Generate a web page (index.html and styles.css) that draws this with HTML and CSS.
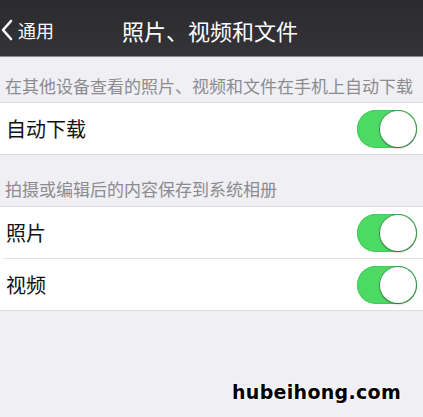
FILE: index.html
```html
<!DOCTYPE html>
<html lang="zh">
<head>
<meta charset="utf-8">
<link rel="stylesheet" href="styles.css">
</head>
<body>
<div class="page">
  <header class="nav">
    <div class="back">
      <svg class="chev" width="12" height="22" viewBox="0 0 12 22"><path d="M10 2 L2 11 L10 20" fill="none" stroke="#fff" stroke-width="2.6" stroke-linecap="round" stroke-linejoin="round"/></svg>
      <span>通用</span>
    </div>
    <div class="title">照片、视频和文件</div>
  </header>
  <div class="sec-head first">在其他设备查看的照片、视频和文件在手机上自动下载</div>
  <div class="group">
    <div class="row"><span class="label">自动下载</span><span class="switch"><span class="knob"></span></span></div>
  </div>
  <div class="sec-head">拍摄或编辑后的内容保存到系统相册</div>
  <div class="group">
    <div class="row"><span class="label">照片</span><span class="switch"><span class="knob"></span></span></div>
    <div class="sep"></div>
    <div class="row"><span class="label">视频</span><span class="switch"><span class="knob"></span></span></div>
  </div>
  <div class="footer"><span class="mark">hubeihong.com</span></div>
</div>
</body>
</html>
```

FILE: styles.css
```css
html, body { margin: 0; padding: 0; }
body {
  background: #efeff4;
  font-family: "Noto Sans CJK SC", "Noto Sans", sans-serif;
  width: 423px;
  height: 417px;
  overflow: hidden;
}
.page { display: flex; flex-direction: column; height: 417px; }
.nav {
  height: 57px;
  background: linear-gradient(#2b2b2f, #333338);
  display: flex;
  align-items: center;
  position: relative;
  border-bottom: 1px solid #8a8a8e;
  box-sizing: border-box;
}
.back {
  display: flex;
  align-items: center;
  color: #fff;
  font-size: 18px;
  gap: 5px;
  padding-left: 1px;
  margin-top: 3px;
}
.chev { display: block; }
.title {
  position: absolute;
  left: 0; right: 0;
  top: 0; bottom: 0;
  display: flex;
  align-items: center;
  justify-content: center;
  color: #fff;
  font-size: 22px;
  padding-right: 3px;
  margin-top: 3px;
  pointer-events: none;
}
.sec-head {
  color: #8b8b90;
  font-size: 17px;
  padding: 0 0 0 5px;
  height: 52px;
  box-sizing: border-box;
  display: flex;
  align-items: flex-end;
  padding-bottom: 5px;
  border-bottom: 1px solid #dcdce0;
  white-space: nowrap;
}
.sec-head.first { height: 46px; padding-bottom: 4px; }
.group {
  background: #fff;
  border-bottom: 1px solid #dcdce0;
}
.row {
  height: 51px;
  display: flex;
  align-items: center;
  justify-content: space-between;
  padding: 0 6px 0 6px;
}
.label { font-size: 20px; color: #111; }
.sep { height: 1px; background: #e2e2e6; margin-left: 4px; }
.switch {
  width: 60px;
  height: 38px;
  border-radius: 19px;
  background: #4cd964;
  position: relative;
  box-shadow: 0 0 0 1px #45c95c inset;
}
.knob {
  position: absolute;
  right: 1px;
  top: 1px;
  width: 36px;
  height: 36px;
  border-radius: 50%;
  background: #fff;
  box-shadow: 0 1px 2px rgba(0,0,0,0.35), 0 0 0 1px rgba(60,110,70,0.45);
}
.footer {
  flex: 1;
  display: flex;
  align-items: flex-end;
  justify-content: flex-end;
  padding: 0 22px 14px 0;
}
.mark {
  font-family: "DejaVu Sans", sans-serif;
  font-weight: bold;
  font-size: 19px;
  color: #000;
  text-shadow: 0 0 2px #fff, 0 0 2px #fff, 0 0 3px #fff;
  letter-spacing: 0.3px;
}
```
